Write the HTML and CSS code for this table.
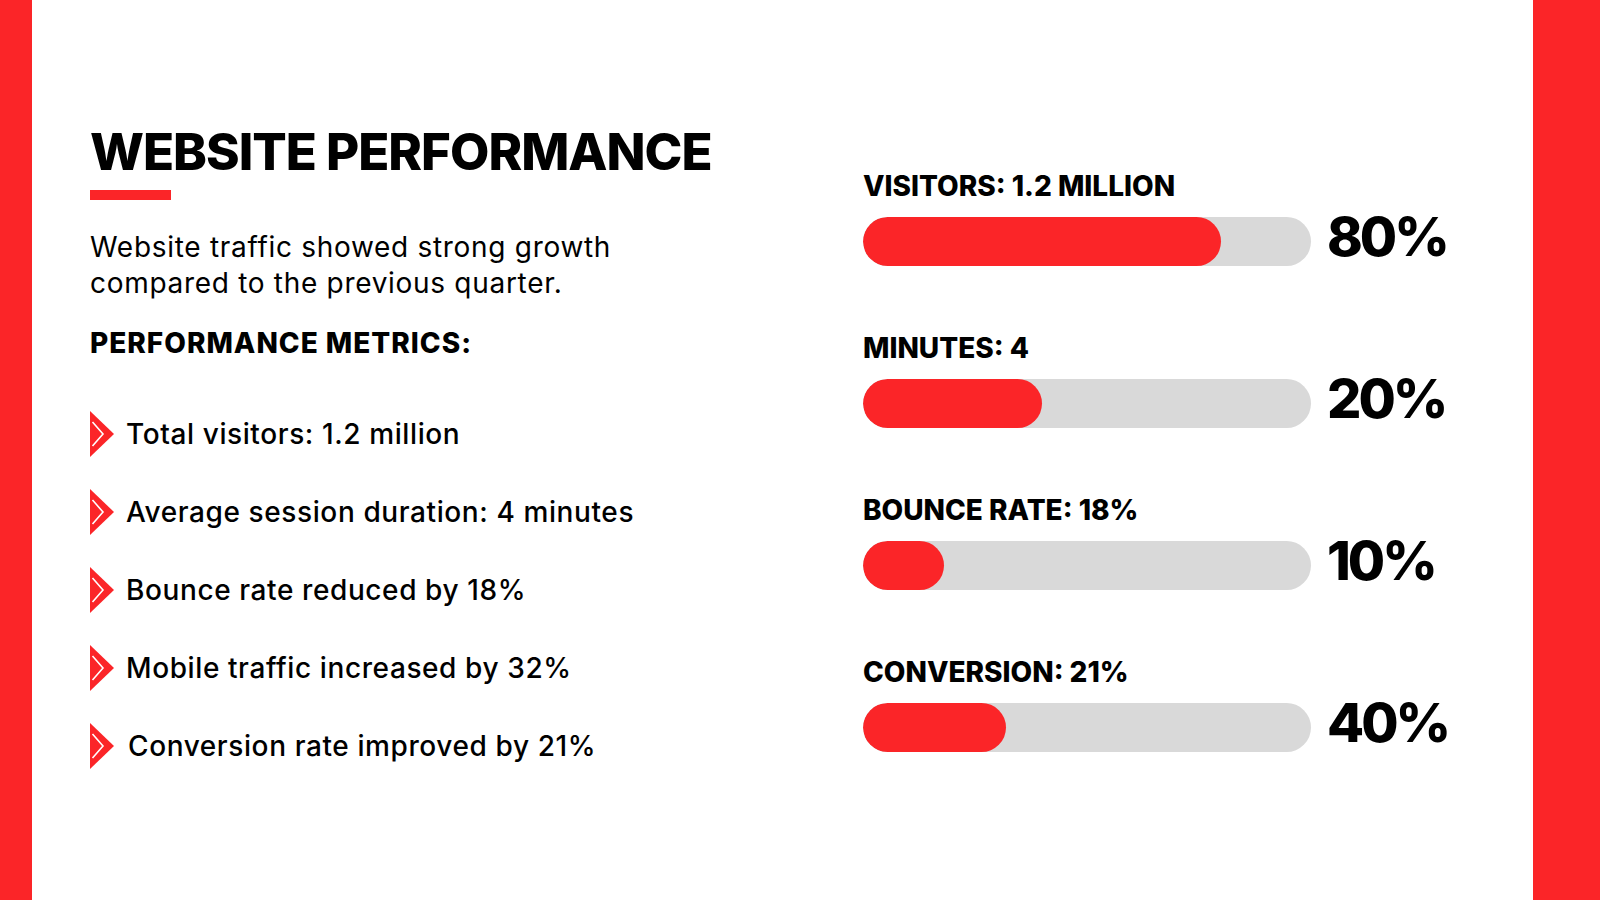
FILE: index.html
```html
<!DOCTYPE html>
<html lang="en">
<head>
<meta charset="utf-8">
<title>Website Performance</title>
<link rel="stylesheet" href="styles.css">
</head>
<body>
<div class="slide">
  <div class="edge edge-left"></div>
  <main class="content">
    <section class="left">
      <h1 class="title">WEBSITE PERFORMANCE</h1>
      <div class="underline"></div>
      <p class="intro">Website traffic showed strong growth<br>compared to the previous quarter.</p>
      <h2 class="subhead">PERFORMANCE METRICS:</h2>
      <ul class="metrics">
        <li class="metric"><svg class="chev" viewBox="0 0 24 46"><polygon points="0,0 24,23 0,46" fill="#fb2528"/><polyline points="2.5,11 13,23 2.5,35" fill="none" stroke="#fff" stroke-width="1.6"/></svg><span>Total visitors: 1.2 million</span></li>
        <li class="metric"><svg class="chev" viewBox="0 0 24 46"><polygon points="0,0 24,23 0,46" fill="#fb2528"/><polyline points="2.5,11 13,23 2.5,35" fill="none" stroke="#fff" stroke-width="1.6"/></svg><span>Average session duration: 4 minutes</span></li>
        <li class="metric"><svg class="chev" viewBox="0 0 24 46"><polygon points="0,0 24,23 0,46" fill="#fb2528"/><polyline points="2.5,11 13,23 2.5,35" fill="none" stroke="#fff" stroke-width="1.6"/></svg><span>Bounce rate reduced by 18%</span></li>
        <li class="metric"><svg class="chev" viewBox="0 0 24 46"><polygon points="0,0 24,23 0,46" fill="#fb2528"/><polyline points="2.5,11 13,23 2.5,35" fill="none" stroke="#fff" stroke-width="1.6"/></svg><span>Mobile traffic increased by 32%</span></li>
        <li class="metric"><svg class="chev" viewBox="0 0 24 46"><polygon points="0,0 24,23 0,46" fill="#fb2528"/><polyline points="2.5,11 13,23 2.5,35" fill="none" stroke="#fff" stroke-width="1.6"/></svg><span class="last">Conversion rate improved by 21%</span></li>
      </ul>
    </section>
    <section class="right">
      <div class="stat">
        <div class="stat-label">VISITORS: 1.2 MILLION</div>
        <div class="stat-row">
          <div class="track"><div class="fill" style="width:80%"></div></div>
          <div class="pct">80%</div>
        </div>
      </div>
      <div class="stat">
        <div class="stat-label">MINUTES: 4</div>
        <div class="stat-row">
          <div class="track"><div class="fill" style="width:40%"></div></div>
          <div class="pct">20%</div>
        </div>
      </div>
      <div class="stat">
        <div class="stat-label">BOUNCE RATE: 18%</div>
        <div class="stat-row">
          <div class="track"><div class="fill" style="width:18%"></div></div>
          <div class="pct">10%</div>
        </div>
      </div>
      <div class="stat">
        <div class="stat-label">CONVERSION: 21%</div>
        <div class="stat-row">
          <div class="track"><div class="fill" style="width:32%"></div></div>
          <div class="pct">40%</div>
        </div>
      </div>
    </section>
  </main>
  <div class="edge edge-right"></div>
</div>
</body>
</html>
```

FILE: styles.css
```css
* { box-sizing: border-box; }
html, body { margin: 0; padding: 0; background: #fff; }
body {
  font-family: Inter, "Open Sans", "Liberation Sans", sans-serif;
  color: #000;
}
.slide {
  width: 1600px;
  height: 900px;
  display: flex;
  overflow: hidden;
}
.edge { background: #fb2528; flex: none; }
.edge-left { width: 32px; }
.edge-right { width: 67px; }
.content {
  flex: 1;
  display: flex;
}
.left {
  width: 831px;
  padding-left: 58px;
  padding-top: 122px;
}
.title {
  margin: 0;
  font-size: 51px;
  line-height: 60px;
  font-weight: 800;
  letter-spacing: -1px;
}
.underline {
  width: 81px;
  height: 10px;
  background: #fb2528;
  margin-top: 8px;
}
.intro {
  margin: 29px 0 0;
  font-size: 28px;
  line-height: 36px;
  font-weight: 400;
  letter-spacing: 0.7px;
}
.subhead {
  margin: 26px 0 0;
  font-size: 28px;
  line-height: 32px;
  font-weight: 800;
  letter-spacing: 1px;
}
.metrics {
  list-style: none;
  margin: 36px 0 0;
  padding: 0;
}
.metric {
  height: 78px;
  display: flex;
  align-items: center;
  gap: 12px;
  font-size: 28px;
  font-weight: 500;
  letter-spacing: 0.6px;
}
.metric .last { margin-left: 2px; }
.chev { width: 24px; height: 46px; flex: none; }
.right {
  padding-top: 171px;
  display: flex;
  flex-direction: column;
  gap: 67px;
}
.stat-label {
  font-size: 28px;
  line-height: 30px;
  font-weight: 800;
  margin-bottom: 16px;
}
.stat-row {
  display: flex;
  align-items: flex-start;
  gap: 16px;
}
.track {
  width: 448px;
  height: 49px;
  border-radius: 25px;
  background: #d9d9d9;
  overflow: hidden;
  flex: none;
}
.fill {
  height: 100%;
  background: #fb2528;
  border-radius: 25px;
}
.pct {
  font-size: 54px;
  line-height: 58px;
  margin-top: -9px;
  font-weight: 800;
  letter-spacing: -3px;
}
```
